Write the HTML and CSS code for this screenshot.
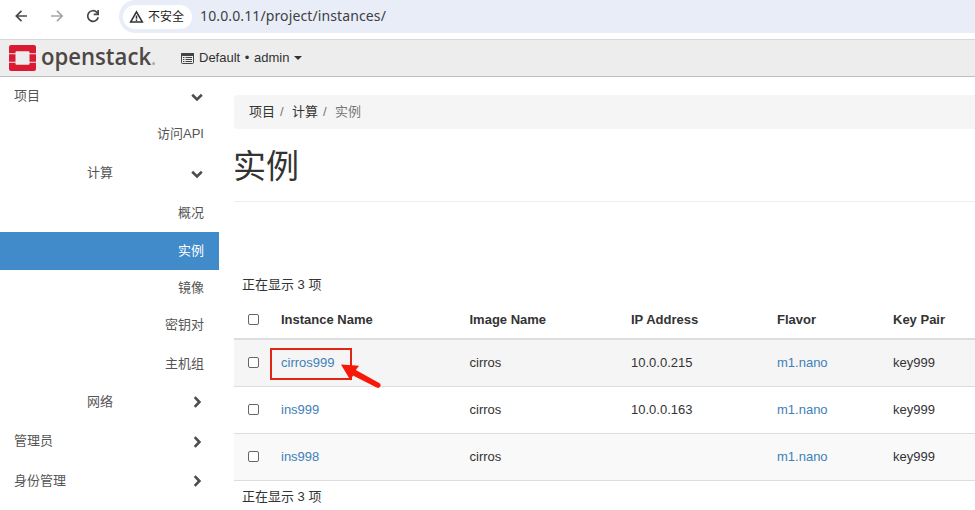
FILE: index.html
```
<!DOCTYPE html>
<html lang="zh-CN">
<head>
<meta charset="utf-8">
<title>实例 - OpenStack Dashboard</title>
<link rel="stylesheet" href="styles.css">
</head>
<body>
<div class="browser">
  <svg class="nav" width="112" height="33" viewBox="0 0 112 33" fill="none" stroke-width="1.7">
    <path stroke="#45484b" d="M27 16H16.500M21.500 10.800L16.300 16l5.200 5.200"/>
    <path stroke="#a5a7a9" d="M51 16h11M57 10.800l5.200 5.200-5.200 5.200"/>
    <path stroke="#45484b" d="M98.200 17.200a5.300 5.300 0 1 1-1.400-4.900l1.600 1.700"/>
    <path fill="#45484b" d="M99 9.900v5.300h-5.300v-1.700h3.600V9.900z"/>
  </svg>
  <div class="address">
    <div class="chip">
      <svg width="15" height="14" viewBox="0 0 15 14" fill="none" stroke="#303236" stroke-width="1.500"><path d="M7.500 1.800L13.400 12H1.600zM7.500 5.400v3.400M7.500 9.600v1.400"/></svg>
      <span>不安全</span>
    </div>
    <span class="url">10.0.0.11/project/instances/</span>
  </div>
</div>
<header class="topbar">
  <svg class="mark" width="27" height="26" viewBox="0 0 27 27" preserveAspectRatio="none" fill="#da1a32">
    <path d="M2 0h23a2 2 0 0 1 2 2v6.500h-6.500V7.500a1 1 0 0 0-1-1h-12a1 1 0 0 0-1 1v1H0V2a2 2 0 0 1 2-2zM0 9.600h6.500v7.800H0zM20.500 9.600H27v7.800h-6.500zM0 18.500h6.500v1a1 1 0 0 0 1 1h12a1 1 0 0 0 1-1v-1H27V25a2 2 0 0 1-2 2H2a2 2 0 0 1-2-2z"/>
  </svg>
  <span class="brand">openstack<i>.</i></span>
  <div class="context">
    <svg width="13" height="11" viewBox="0 0 13 11"><rect x=".5" y=".5" width="12" height="10" rx="1" fill="none" stroke="#444"/><path fill="#444" d="M0 0h13v3H0zM2 4h1.400v1H2zM4.500 4H11v1H4.500zM2 6h1.400v1H2zM4.500 6H11v1H4.500zM2 8h1.400v1H2zM4.500 8H11v1H4.500z"/></svg>
    <span class="domain">Default <b>•</b> admin</span>
    <span class="caret"></span>
  </div>
</header>
<div class="layout">
  <nav class="sidebar">
    <div class="item h38"><span>项目</span><svg class="chev" viewBox="0 0 12 12"><path d="M1.200 3.700L6 8.400l4.800-4.700"/></svg></div>
    <div class="item leaf h38">访问API</div>
    <div class="item group h40"><span>计算</span><svg class="chev" viewBox="0 0 12 12"><path d="M1.200 3.700L6 8.400l4.800-4.700"/></svg></div>
    <div class="item leaf">概况</div>
    <div class="item leaf active h38">实例</div>
    <div class="item leaf h35">镜像</div>
    <div class="item leaf h40">密钥对</div>
    <div class="item leaf h37">主机组</div>
    <div class="item group"><span>网络</span><svg class="chev" viewBox="0 0 12 12"><path d="M3.700 1.200L8.400 6l-4.700 4.800"/></svg></div>
    <div class="item h40"><span>管理员</span><svg class="chev" viewBox="0 0 12 12"><path d="M3.700 1.200L8.400 6l-4.700 4.800"/></svg></div>
    <div class="item"><span>身份管理</span><svg class="chev" viewBox="0 0 12 12"><path d="M3.700 1.200L8.400 6l-4.700 4.800"/></svg></div>
  </nav>
  <main class="content">
    <div class="breadcrumb"><span>项目</span><span class="sep">/</span><span>计算</span><span class="sep">/</span><span class="current">实例</span></div>
    <h1>实例</h1>
    <p class="count top">正在显示 3 项</p>
    <div class="row head"><span class="check"></span><span>Instance Name</span><span>Image Name</span><span>IP Address</span><span>Flavor</span><span>Key Pair</span></div>
    <div class="row hover">
      <span class="check"></span>
      <span class="target"><a>cirros999</a>
        <span class="outline"></span>
        <svg class="arrow" width="44" height="30" viewBox="0 0 44 30"><path fill="#f81808" d="M2 3.500l18 1.300-3.200 4.200L40.200 22a2.500 2.500 0 0 1-2.600 4.500L14 14.500l-2.500 5z"/></svg>
      </span>
      <span>cirros</span><span>10.0.0.215</span><a>m1.nano</a><span>key999</span>
    </div>
    <div class="row"><span class="check"></span><a>ins999</a><span>cirros</span><span>10.0.0.163</span><a>m1.nano</a><span>key999</span></div>
    <div class="row odd"><span class="check"></span><a>ins998</a><span>cirros</span><span></span><a>m1.nano</a><span>key999</span></div>
    <p class="count">正在显示 3 项</p>
  </main>
</div>
</body>
</html>
```
FILE: styles.css
```
* { box-sizing: border-box; }
body {
  margin: 0;
  height: 510px;
  overflow: hidden;
  background: #fff;
  color: #333;
  font: 13px/18px "Liberation Sans", "Noto Sans CJK SC", sans-serif;
}
svg { display: block; flex: none; }
.browser { display: flex; height: 39px; }
.address {
  display: flex;
  align-items: center;
  flex: 1;
  height: 33px;
  margin-left: 7px;
  padding-left: 4px;
  background: #e9edf7;
  border-radius: 17px 0 0 17px;
}
.chip {
  display: flex;
  align-items: center;
  width: 69px;
  height: 24px;
  padding-left: 6px;
  gap: 4px;
  border-radius: 12px;
  background: #fff;
  color: #222;
  font-size: 12px;
  white-space: nowrap;
}
.url {
  margin: -2px 0 0 8px;
  color: #3c4043;
  font: 14px/20px "Noto Sans", sans-serif;
  letter-spacing: 0.12px;
}
.topbar {
  display: flex;
  align-items: center;
  height: 38px;
  padding-left: 9px;
  background: #ededed;
  border-top: 1px solid #d8d8d8;
  border-bottom: 1px solid #bfbfbf;
}
.brand {
  width: 117px;
  margin: -3px 0 0 5px;
  color: #4d4845;
  font: 600 24px/30px "Open Sans", sans-serif;
  transform: scaleX(0.922);
  transform-origin: 0 50%;
}
.brand i { color: #aaa; font-size: 20px; font-style: normal; }
.context { display: flex; align-items: center; margin-left: 23px; }
.domain { margin-left: 5px; white-space: pre; }
.domain b { padding: 0 1px; font-weight: 400; }
.caret {
  margin-left: 5px;
  border: 4px solid transparent;
  border-top-color: #333;
  border-bottom: 0;
}
.layout { display: flex; }
.sidebar { width: 219px; }
.item {
  display: flex;
  align-items: center;
  justify-content: space-between;
  height: 39px;
  padding: 0 15px 0 14px;
  color: #555;
}
.item.group { padding-left: 87px; }
.item.leaf { justify-content: flex-end; }
.item.active { background: #428bca; color: #fff; }
.item.h35 { height: 35px; }
.item.h37 { height: 37px; }
.item.h38 { height: 38px; }
.item.h40 { height: 40px; }
.chev {
  width: 12px;
  height: 12px;
  margin: 1px 1px 0 0;
  fill: none;
  stroke: #4d4d4d;
  stroke-width: 2.6;
}
.content { flex: 1; margin-left: 15px; padding-top: 18px; }
.breadcrumb {
  display: flex;
  align-items: center;
  height: 34px;
  padding: 0 0 1px 15px;
  background: #f5f5f5;
  border-radius: 4px 0 0 4px;
}
.sep { width: 17px; padding-left: 5px; color: #777; }
.current { color: #777; }
h1 {
  height: 73px;
  margin: 0;
  padding-top: 18px;
  border-bottom: 1px solid #eee;
  font-size: 33px;
  font-weight: 400;
  line-height: 40px;
  text-indent: -1px;
}
.count { margin: 0; padding: 7px 0 0 8px; }
.count.top { height: 98px; padding-top: 74px; }
.row {
  display: grid;
  grid-template-columns: 47px 188.5px 161.5px 146px 116px 1fr;
  align-items: center;
  height: 47px;
  border-bottom: 1px solid #ddd;
}
.row.head { height: 40px; padding-top: 2px; border-bottom-width: 2px; font-weight: 700; }
.row.hover { background: #f5f5f5; }
.row.odd { background: #f9f9f9; }
.row a { color: #4180b8; }
.check {
  width: 11px;
  height: 11px;
  margin: 0 0 1px 14px;
  border: 1px solid #666;
  border-radius: 2px;
  background: #fff;
}
.target { position: relative; }
.outline {
  position: absolute;
  top: -6px;
  left: -11px;
  width: 82px;
  height: 32px;
  border: 2px solid #e02416;
}
.arrow { position: absolute; top: 7px; left: 58px; }
```
